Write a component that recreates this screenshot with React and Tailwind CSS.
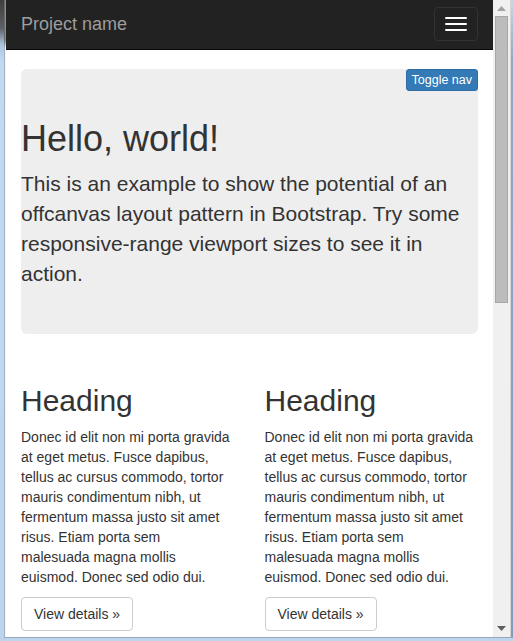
import React from "react";

const para = [
  "Donec id elit non mi porta gravida",
  "at eget metus. Fusce dapibus,",
  "tellus ac cursus commodo, tortor",
  "mauris condimentum nibh, ut",
  "fermentum massa justo sit amet",
  "risus. Etiam porta sem",
  "malesuada magna mollis",
  "euismod. Donec sed odio dui.",
];

function Column() {
  return (
    <div className="w-1/2 px-[15px]">
      <h2 className="mt-[20px] mb-[10px] text-[30px] leading-[33px] font-normal text-[#333]">Heading</h2>
      <p className="mb-[10px] text-[14px] leading-[20px] text-[#333] whitespace-nowrap">
        {para.map((l, i) => (
          <React.Fragment key={i}>
            {l}
            {i < para.length - 1 && <br />}
          </React.Fragment>
        ))}
      </p>
      <button className="border border-[#ccc] rounded-[4px] bg-white px-[12px] py-[6px] text-[14px] leading-[20px] text-[#333]">
        View details »
      </button>
    </div>
  );
}

export default function App() {
  return (
    <div className="w-[513px] h-[641px] flex flex-col bg-[#bcd4ee] font-['Liberation_Sans',Arial,sans-serif] overflow-hidden">
      <div className="flex h-[637px]">
        {/* left window frame */}
        <div className="flex w-[6px] h-full">
          <div className="w-[4px] h-full bg-[linear-gradient(to_bottom,#3e3e3e_0px,#5c5f64_28px,#a9c2dc_44px,#c2d9f0_60px,#bcd4ee_100%)]" />
          <div className="w-[1px] h-full bg-[linear-gradient(to_bottom,#6b6b6b_0px,#6b6b6b_40px,#9fb2c6_48px,#9fb2c6_100%)]" />
          <div className="w-[1px] h-full bg-[linear-gradient(to_bottom,#8a8a8a_0px,#8a8a8a_40px,#f4f8fc_48px,#f4f8fc_100%)]" />
        </div>

        {/* page */}
        <div className="w-[487px] h-full bg-white overflow-hidden">
          <div className="h-[49px] bg-[#222] border-b border-[#080808] flex justify-between items-start px-[15px] box-content">
            <div className="pt-[14px] text-[18px] leading-[20px] text-[#9d9d9d]">Project name</div>
            <div className="mt-[7px] w-[44px] h-[34px] border border-[#333] rounded-[4px] flex flex-col items-center justify-center gap-[4px]">
              <span className="block w-[22px] h-[2px] rounded-[1px] bg-white" />
              <span className="block w-[22px] h-[2px] rounded-[1px] bg-white" />
              <span className="block w-[22px] h-[2px] rounded-[1px] bg-white" />
            </div>
          </div>

          <div className="px-[15px] pt-[19px]">
            <div className="relative bg-[#eee] rounded-[6px] pt-[50px] pb-[30px] text-[#333]">
              <button className="absolute top-0 right-0 bg-[#337ab7] border border-[#2e6da4] text-white text-[12.5px] leading-[18px] px-[5px] py-[1px] rounded-[3px]">
                Toggle nav
              </button>
              <h1 className="text-[36px] leading-[39.6px] mb-[10px] font-normal">Hello, world!</h1>
              <p className="text-[21px] leading-[30px] mb-[15px] whitespace-nowrap">
                This is an example to show the potential of an
                <br />
                offcanvas layout pattern in Bootstrap. Try some
                <br />
                responsive-range viewport sizes to see it in
                <br />
                action.
              </p>
            </div>

            <div className="mt-[30px] -mx-[15px] flex">
              <Column />
              <Column />
            </div>
          </div>
        </div>

        {/* scrollbar */}
        <div className="w-[17px] h-full bg-[#f0f0f0] flex flex-col">
          <div className="h-[16px] flex items-center justify-center">
            <svg width="9" height="5" viewBox="0 0 9 5">
              <polygon points="0,5 9,5 4.5,0" fill="#a3a3a3" />
            </svg>
          </div>
          <div className="ml-[2px] w-[13px] h-[287px] bg-[#bcbcbc] border border-[#a7a7a7]" />
          <div className="flex-1" />
          <div className="h-[17px] flex items-center justify-center">
            <svg width="9" height="5" viewBox="0 0 9 5">
              <polygon points="0,0 9,0 4.5,5" fill="#5e5e5e" />
            </svg>
          </div>
        </div>

        {/* right window frame */}
        <div className="flex w-[3px] h-full">
          <div className="w-[1px] h-full bg-[#d6d6d6]" />
          <div className="w-[2px] h-full bg-[linear-gradient(to_bottom,#c9d6e4_0px,#8fa9c9_60px,#7f9cc2_100%)]" />
        </div>
      </div>
      {/* bottom frame */}
      <div className="flex h-[4px]">
        <div className="w-[4px] h-full bg-[#bcd4ee]" />
        <div className="flex-1 flex flex-col">
          <div className="h-[1px] bg-[#9aa7b6]" />
          <div className="flex-1 bg-[#bcd4ee]" />
        </div>
      </div>
    </div>
  );
}
